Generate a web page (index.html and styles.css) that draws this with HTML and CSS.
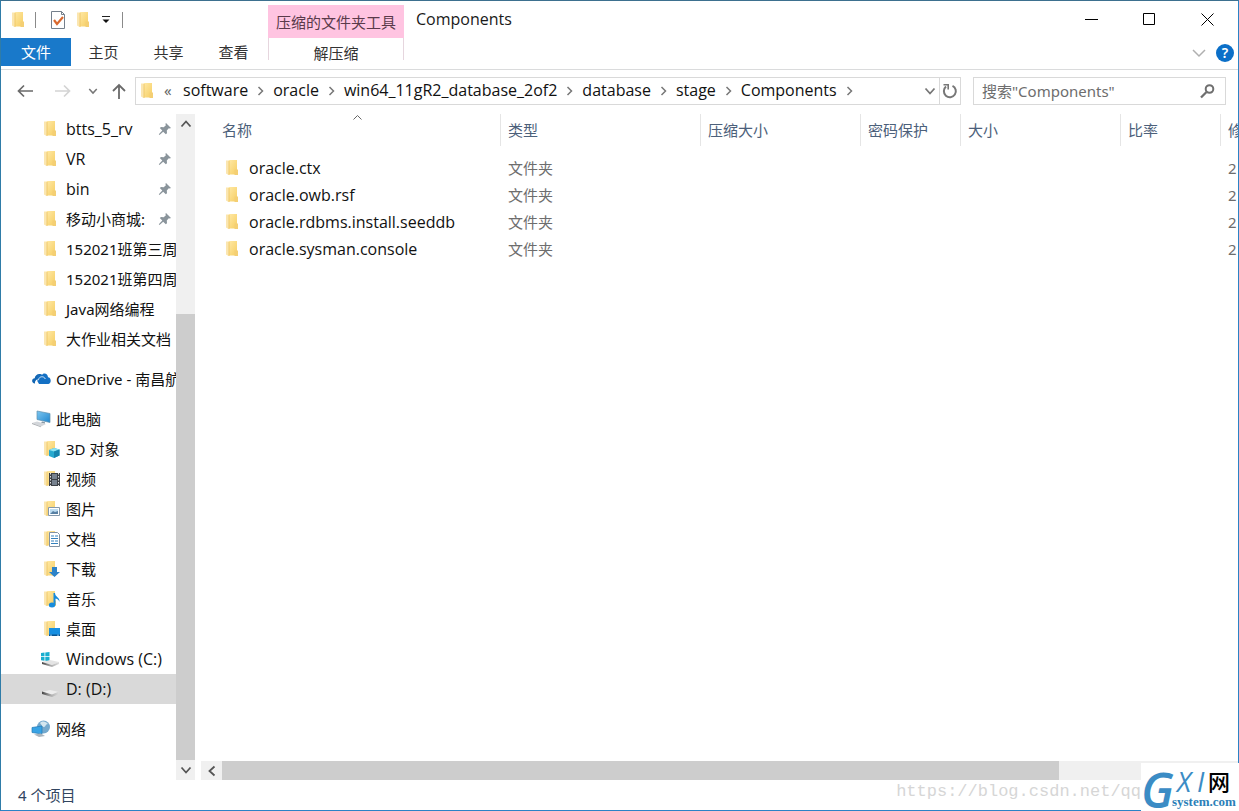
FILE: index.html
```html
<!DOCTYPE html>
<html lang="zh-CN">
<head>
<meta charset="utf-8">
<title>Components</title>
<link rel="stylesheet" href="styles.css">
</head>
<body>
<svg class="defs" aria-hidden="true">
  <defs>
    <linearGradient id="gold" x1="0" x2="1" y1="0" y2="1"><stop offset="0" stop-color="#ffe9a6"/><stop offset="1" stop-color="#f6ce63"/></linearGradient>
    <linearGradient id="screen" x1="0" x2="1" y1="0" y2="1"><stop offset="0" stop-color="#7cc6f0"/><stop offset="1" stop-color="#2187cf"/></linearGradient>
    <linearGradient id="metal" x1="0" x2="1"><stop offset="0" stop-color="#444"/><stop offset=".5" stop-color="#aaa"/><stop offset="1" stop-color="#ddd"/></linearGradient>
    <symbol id="folder" viewBox="0 0 20 20"><path d="M4 2.500h2.500V17L4 15.500z" fill="#fbe6b0"/><path d="M6.500 2h8.500v14.500H6.500z" fill="url(#gold)"/><path d="M6.500 3h1v14h-1z" fill="#efc869"/><path d="M12.500 11.500H16V17h-3.500z" fill="#f4cf74"/></symbol>
    <symbol id="chev-r" viewBox="0 0 10 10"><path d="M3 1l4 4-4 4" fill="none" stroke="currentColor" stroke-width="1.500"/></symbol>
    <symbol id="chev-d" viewBox="0 0 12 12"><path d="M1.500 3.500L6 8.500l4.500-5" fill="none" stroke="currentColor" stroke-width="1.800"/></symbol>
    <symbol id="pin" viewBox="0 0 14 14"><path d="M8 1l5 5-1.300.6-.9-.4-2 2.300.2 2.700-1.200 1.100-2.600-2.600L1.500 13 .8 12.300l3.500-3.700L1.800 6l1.200-1.100 2.700.4L7.900 3.200 7.400 2z" fill="#8a949b"/></symbol>
  </defs>
</svg>
<div class="window">
  <header class="ribbon">
    <div class="ribbon-left">
      <div class="quick">
        <svg class="ic"><use href="#folder"/></svg>
        <span class="bar"></span>
        <button class="plain" aria-label="属性"><svg class="ic" viewBox="0 0 20 20"><path d="M3.500 1.500h10l3 3v14h-13z" fill="#fff" stroke="#75808c"/><path d="M13.500 1.500v3h3" fill="none" stroke="#75808c"/><path d="M6 10l3 4 6-7" fill="none" stroke="#d9692f" stroke-width="2.200"/></svg></button>
        <button class="plain" aria-label="新建文件夹"><svg class="ic"><use href="#folder"/></svg></button>
        <button class="plain more" aria-label="自定义"><svg width="8" height="8" viewBox="0 0 8 8"><path d="M0 .5h8" stroke="#222"/><path d="M.5 3.500h7L4 7z" fill="#111"/></svg></button>
        <span class="bar"></span>
      </div>
      <nav class="tabs"><button class="tab file">文件</button><button class="tab">主页</button><button class="tab">共享</button><button class="tab">查看</button></nav>
    </div>
    <div class="context"><div class="context-name">压缩的文件夹工具</div><button class="context-tab">解压缩</button></div>
    <h1 class="title">Components</h1>
    <div class="ribbon-right">
      <div class="controls">
        <button class="plain" aria-label="最小化"><svg width="13" height="13" viewBox="0 0 13 13"><path d="M0 6.500h13" stroke="#000"/></svg></button>
        <button class="plain" aria-label="最大化"><svg width="13" height="13" viewBox="0 0 13 13"><path d="M.5.5h11v11H.5z" fill="none" stroke="#000"/></svg></button>
        <button class="plain" aria-label="关闭"><svg width="13" height="13" viewBox="0 0 13 13"><path d="M.5.5l12 12M12.500.5l-12 12" stroke="#000"/></svg></button>
      </div>
      <div class="help-row">
        <button class="plain expand" aria-label="展开功能区"><svg width="14" height="14" viewBox="0 0 14 14"><path d="M1 4l6 6 6-6" fill="none" stroke="#b0b0b0" stroke-width="1.500"/></svg></button>
        <button class="help" aria-label="帮助">?</button>
      </div>
    </div>
  </header>

  <div class="navbar">
    <button class="plain nav" aria-label="后退"><svg width="16" height="16" viewBox="0 0 16 16"><path d="M16 8H1.500M7 2.500L1.500 8 7 13.500" fill="none" stroke="#6a6a6a" stroke-width="1.700"/></svg></button>
    <button class="plain nav" aria-label="前进"><svg width="16" height="16" viewBox="0 0 16 16"><path d="M0 8h14.500M9 2.500L14.500 8 9 13.500" fill="none" stroke="#d4d4d4" stroke-width="1.700"/></svg></button>
    <button class="plain nav recent" aria-label="最近位置"><svg width="10" height="10"><use href="#chev-d"/></svg></button>
    <button class="plain nav up" aria-label="上移"><svg width="16" height="16" viewBox="0 0 16 16"><path d="M8 16V2M2 8l6-6 6 6" fill="none" stroke="#6a6a6a" stroke-width="1.800"/></svg></button>
    <div class="address">
      <svg class="ic addr-ic"><use href="#folder"/></svg>
      <span class="laquo">«</span>
      <a href="#">software</a><svg class="sep"><use href="#chev-r"/></svg>
      <a href="#">oracle</a><svg class="sep"><use href="#chev-r"/></svg>
      <a href="#">win64_11gR2_database_2of2</a><svg class="sep"><use href="#chev-r"/></svg>
      <a href="#">database</a><svg class="sep"><use href="#chev-r"/></svg>
      <a href="#">stage</a><svg class="sep"><use href="#chev-r"/></svg>
      <a href="#">Components</a><svg class="sep"><use href="#chev-r"/></svg>
      <span class="grow"></span>
      <button class="plain drop" aria-label="历史"><svg width="12" height="12"><use href="#chev-d"/></svg></button>
      <button class="plain refresh" aria-label="刷新"><svg width="16" height="16" viewBox="0 0 16 16"><path d="M10.500 2.800A6 6 0 1 1 4 3.600" fill="none" stroke="#777" stroke-width="2"/><path d="M1.500 1.800h4.700v4.700" fill="none" stroke="#777" stroke-width="1.600"/></svg></button>
    </div>
    <div class="search">
      <input type="text" aria-label="搜索" placeholder="搜索&quot;Components&quot;">
      <svg width="15" height="15" viewBox="0 0 15 15"><circle cx="9.500" cy="5" r="3.800" fill="none" stroke="#6f6f6f" stroke-width="2"/><path d="M6.500 8L1 13.500" stroke="#6f6f6f" stroke-width="2.300"/></svg>
    </div>
  </div>

  <div class="body">
    <nav class="tree">
      <a class="item" href="#"><svg class="ic"><use href="#folder"/></svg><span class="latin">btts_5_rv</span><svg class="pin"><use href="#pin"/></svg></a>
      <a class="item" href="#"><svg class="ic"><use href="#folder"/></svg><span class="latin">VR</span><svg class="pin"><use href="#pin"/></svg></a>
      <a class="item" href="#"><svg class="ic"><use href="#folder"/></svg><span class="latin">bin</span><svg class="pin"><use href="#pin"/></svg></a>
      <a class="item" href="#"><svg class="ic"><use href="#folder"/></svg><span>移动小商城:</span><svg class="pin"><use href="#pin"/></svg></a>
      <a class="item" href="#"><svg class="ic"><use href="#folder"/></svg><span>152021班第三周</span></a>
      <a class="item" href="#"><svg class="ic"><use href="#folder"/></svg><span>152021班第四周</span></a>
      <a class="item" href="#"><svg class="ic"><use href="#folder"/></svg><span>Java网络编程</span></a>
      <a class="item" href="#"><svg class="ic"><use href="#folder"/></svg><span>大作业相关文档</span></a>
      <a class="item root" href="#"><svg class="ic" viewBox="0 0 20 20"><path d="M6 11.500C5 8 8 5 11 6c2-3 6-1 6 2.200 3 0 4 5.800.5 6.800H8z" fill="#1470c4"/><path d="M4 14.500c-4-.3-3.500-5.200-.3-5.200C4 5 9 3.600 11.500 6.200 8 5.500 6 8 6.300 10.200 4.500 11 3.800 13 4 14.500z" fill="#1265b2"/><path d="M7.500 15.500c-3.600-.4-3-4.700 0-4.700.5-3.800 5.800-4 6.800-.8" fill="none" stroke="#fff" stroke-width=".8"/></svg><span>OneDrive - 南昌航</span></a>
      <a class="item root" href="#"><svg class="ic" viewBox="0 0 20 20"><path d="M6 2l13 2.500v9L6 10.500z" fill="url(#screen)" stroke="#5e8fae" stroke-width=".7"/><path d="M11 12.500l3 .7v1.500l-4-1z" fill="#8798a5"/><path d="M1 14l5-1.500 9 2.500-5 2.500z" fill="#d3d6da"/><path d="M1 14l9 3.500v.8L1 15z" fill="#a5a9ae"/></svg><span>此电脑</span></a>
      <a class="item" href="#"><svg class="ic" viewBox="0 0 20 20"><use href="#folder" width="20" height="20"/><path d="M9 11l5-2 5.500 1.500v6L14 19l-5-2z" fill="#26a9cf"/><path d="M9 11l5-2 5.500 1.500-5.500 2z" fill="#8de2f1"/><path d="M14 12.500l5.500-2v6L14 19z" fill="#1684ae"/></svg><span>3D 对象</span></a>
      <a class="item" href="#"><svg class="ic" viewBox="0 0 20 20"><use href="#folder" width="20" height="20"/><path d="M9 4h11v13H9z" fill="#3d4147"/><path d="M12 5h5v5h-5zm0 6h5v5h-5z" fill="#77828f"/><path d="M10.500 4v13M18.500 4v13" stroke="#e1e1e1" stroke-dasharray="1.500 1.500"/></svg><span>视频</span></a>
      <a class="item" href="#"><svg class="ic" viewBox="0 0 20 20"><use href="#folder" width="20" height="20"/><path d="M8.500 8.500h11v8h-11z" fill="#fff" stroke="#8599ab"/><path d="M10 10h8v5h-8z" fill="#bcdcf1"/><path d="M10 15l3-3 2 1 3-1v3z" fill="#5880a3"/></svg><span>图片</span></a>
      <a class="item" href="#"><svg class="ic" viewBox="0 0 20 20"><use href="#folder" width="20" height="20"/><path d="M9.500 3.500h8l2 2v12h-10z" fill="#fff" stroke="#8192a2"/><path d="M11 7h3m1 0h3m-7 2.500h7M11 12h3m1 0h3m-7 2.500h7" stroke="#3481bd"/></svg><span>文档</span></a>
      <a class="item" href="#"><svg class="ic" viewBox="0 0 20 20"><use href="#folder" width="20" height="20"/><path d="M12 8h5v5h3l-5.500 5L9 13h3z" fill="#2d83c9"/></svg><span>下载</span></a>
      <a class="item" href="#"><svg class="ic" viewBox="0 0 20 20"><use href="#folder" width="20" height="20"/><ellipse cx="12" cy="16" rx="3.200" ry="2.500" fill="#168bdc"/><path d="M13.500 16V4H15c0 4 5 4 4.500 9-1-3-3-3-4-3.500V16z" fill="#168bdc"/></svg><span>音乐</span></a>
      <a class="item" href="#"><svg class="ic" viewBox="0 0 20 20"><use href="#folder" width="20" height="20"/><path d="M9 9h11v8H9z" fill="#168fe2"/><path d="M9 15.500h11V17H9z" fill="#075493"/><path d="M10 16.200h2m5 0h2" stroke="#a7dbff" stroke-width=".8"/></svg><span>桌面</span></a>
      <a class="item" href="#"><svg class="ic drive" viewBox="0 0 20 20"><path d="M1 4l3.500-.5v3.700H1zM5.300 3.400L9.500 3v4.200H5.300zM1 8h3.500v3.700L1 11.200zm4.300 0h4.200v4.300l-4.200-.5z" fill="#18aecf"/><path d="M2 13l8-2 9 2-7 3z" fill="#e4e4e4"/><path d="M2 13l10 3 7-3v2l-7 3-10-3z" fill="url(#metal)"/></svg><span class="latin">Windows (C:)</span></a>
      <a class="item selected" href="#"><svg class="ic drive" viewBox="0 0 20 20"><path d="M2 13l8-2 9 2-7 3z" fill="#ededed"/><path d="M2 12.500l10 3 7-3v2.500l-7 3-10-3z" fill="url(#metal)"/></svg><span class="latin">D: (D:)</span></a>
      <a class="item root" href="#"><svg class="ic" viewBox="0 0 20 20"><circle cx="12.500" cy="8" r="6.500" fill="#75a9cd"/><path d="M9 4c3-3 6-1 8 1-3 0-2 3-4 3s-2-2-4-4z" fill="#d4e6ef"/><path d="M1 8.500l10-1.500v8L1 13.500z" fill="#38a3e5" stroke="#2278b3" stroke-width=".7"/><path d="M3 15.500l7-1 4 2.500-6 1z" fill="#a9b4bd"/></svg><span>网络</span></a>
    </nav>
    <div class="vscroll">
      <button class="plain arrow" aria-label="向上滚动"><svg class="flip" width="12" height="12"><use href="#chev-d"/></svg></button>
      <div class="vrest"></div>
      <div class="vthumb"></div>
      <button class="plain arrow" aria-label="向下滚动"><svg width="12" height="12"><use href="#chev-d"/></svg></button>
    </div>
    <main class="main">
      <div class="list">
        <table>
          <colgroup><col class="c-name"><col class="c-wide"><col class="c-mid"><col class="c-small"><col class="c-mid"><col class="c-small"><col></colgroup>
          <thead><tr><th class="sorted">名称<svg class="sort" width="9" height="5" viewBox="0 0 9 5"><path d="M.5 4.500l4-4 4 4" fill="none" stroke="#666"/></svg></th><th>类型</th><th>压缩大小</th><th>密码保护</th><th>大小</th><th>比率</th><th>修</th></tr></thead>
          <tbody>
            <tr><td><span class="fname"><svg class="ic"><use href="#folder"/></svg>oracle.ctx</span></td><td>文件夹</td><td></td><td></td><td></td><td></td><td>2</td></tr>
            <tr><td><span class="fname"><svg class="ic"><use href="#folder"/></svg>oracle.owb.rsf</span></td><td>文件夹</td><td></td><td></td><td></td><td></td><td>2</td></tr>
            <tr><td><span class="fname"><svg class="ic"><use href="#folder"/></svg>oracle.rdbms.install.seeddb</span></td><td>文件夹</td><td></td><td></td><td></td><td></td><td>2</td></tr>
            <tr><td><span class="fname"><svg class="ic"><use href="#folder"/></svg>oracle.sysman.console</span></td><td>文件夹</td><td></td><td></td><td></td><td></td><td>2</td></tr>
          </tbody>
        </table>
      </div>
      <div class="hscroll">
        <button class="plain harrow" aria-label="向左滚动"><svg class="left" width="12" height="12"><use href="#chev-d"/></svg></button>
        <div class="hthumb"></div><div class="hrest"></div>
      </div>
    </main>
  </div>
  <footer class="status">4 个项目</footer>
</div>
<div class="watermark">https://blog.csdn.net/qq</div>
<div class="logo">
  <svg width="98" height="48" viewBox="0 0 98 48" role="img" aria-label="GXI网 system.com">
    <text class="lg-g" x="0" y="45">G</text>
    <text class="lg-x" x="36" y="29">X</text>
    <text class="lg-x" x="56" y="29">I</text>
    <text class="lg-w" x="67" y="27">网</text>
    <text class="lg-s" x="31" y="43">system.com</text>
  </svg>
</div>
</body>
</html>
```
FILE: styles.css
```css
* { box-sizing: border-box; }
body {
  margin: 0;
  background: #fff;
  color: #1a1a1a;
  font: 15px/20px "Noto Sans", "Noto Sans CJK SC", sans-serif;
  overflow: hidden;
}
button, input { font: inherit; color: inherit; }
a { color: inherit; text-decoration: none; }
.defs { position: absolute; width: 0; height: 0; }
.ic { width: 20px; height: 20px; flex: none; display: block; }
.plain, .tab, .context-tab { border: 0; padding: 0; background: none; display: flex; align-items: center; justify-content: center; }
.latin, .title, .address a, .fname { font: 400 16px/20px "Open Sans", "Noto Sans CJK SC", sans-serif; }

.window {
  height: 100vh;
  display: flex;
  flex-direction: column;
  border: 1px solid #2b83c6;
  border-top-color: #3d708f;
  border-left-color: #2f7ca8;
}

.ribbon { display: flex; height: 69px; border-bottom: 1px solid #dadbdc; flex: none; }
.ribbon-left { width: 267px; }
.quick { height: 37px; display: flex; align-items: center; padding-left: 7px; }
.bar { width: 1px; height: 16px; background: #8a8a8a; }
.quick .bar { margin-left: 7px; }
.quick .bar + .plain { margin-left: 12px; }
.quick .plain + .plain { margin-left: 5px; }
.quick .more { width: 8px; }
.quick .plain + .more { margin-left: 9px; }
.quick .more + .bar { margin-left: 12px; }
.tabs { display: flex; height: 28px; }
.tab { width: 65px; color: #333; }
.tab.file { width: 70px; background: #1979ca; color: #fff; }
.context { width: 136px; padding-top: 4px; }
.context-name { height: 33px; background: #ffc4e1; color: #5a3a4a; text-align: center; line-height: 34px; white-space: nowrap; }
.context-tab { width: 100%; height: 22px; border: solid #e6d6de; border-width: 0 1px; color: #333; padding-top: 8px; }
.title { flex: 1; margin: 0; padding: 8px 0 0 12px; }
.controls { display: flex; height: 37px; padding-right: 2px; }
.controls .plain { width: 58px; }
.help-row { display: flex; justify-content: flex-end; align-items: center; height: 30px; padding-right: 4px; }
.expand { margin-right: 10px; }
.help { width: 18px; height: 18px; padding: 0; border: 0; border-radius: 50%; background: #0b6fc8; color: #fff; font-size: 14px; font-weight: 600; line-height: 18px; }

.navbar { display: flex; align-items: center; height: 44px; padding: 0 12px 2px 10px; flex: none; }
.nav { width: 28px; height: 28px; color: #777; }
.nav + .nav { margin-left: 10px; }
.nav.recent { width: 20px; margin-left: 6px; }
.nav.up { width: 28px; margin-left: 2px; margin-right: 2px; }
.address { flex: 1; display: flex; align-items: center; height: 28px; border: 1px solid #d9d9d9; color: #111; white-space: nowrap; min-width: 0; }
.address a { padding-bottom: 2px; }
.addr-ic { margin-left: 1px; }
.laquo { width: 26px; padding: 0 0 2px 7px; color: #666; }
.sep { width: 25px; height: 10px; color: #777; flex: none; }
.grow { flex: 1; }
.drop { width: 18px; height: 26px; color: #777; }
.refresh { width: 21px; height: 26px; border-left: 1px solid #d9d9d9; }
.search { width: 253px; height: 28px; margin-left: 12px; border: 1px solid #d9d9d9; display: flex; align-items: center; padding: 0 10px 0 8px; }
.search input { flex: 1; min-width: 0; border: 0; padding: 0; outline: 0; background: none; }
.search input::placeholder { color: #6d6d6d; opacity: 1; }

.body { flex: 1; display: flex; min-height: 0; }
.tree { width: 175px; overflow: hidden; flex: none; }
.item { display: flex; align-items: center; height: 30px; padding-left: 39px; white-space: nowrap; color: #111; }
.item span { margin-left: 6px; }
.item.root { padding-left: 30px; margin: 10px 0; }
.item.root + .item.root { margin-top: 0; }
.item.root:not(:last-child) + .item:not(.root) { margin-top: -10px; }
.item.root span { margin-left: 5px; }
.item.selected { background: #d9d9d9; }
.item .pin { width: 14px; height: 14px; margin-left: auto; margin-right: 4px; }

.vscroll { width: 19px; display: flex; flex-direction: column; background: #f0f0f0; flex: none; color: #555; }
.arrow { height: 20px; width: 100%; flex: none; }
.flip { transform: rotate(180deg); }
.left { transform: rotate(90deg); }
.vrest { flex: 180; }
.vthumb { flex: 446; background: #cdcdcd; }

.main { flex: 1; min-width: 0; display: flex; flex-direction: column; padding-left: 6px; }
.list { flex: 1; overflow: hidden; }
table { width: 100%; table-layout: fixed; border-collapse: separate; border-spacing: 0; }
.c-name { width: 300px; }
.c-wide { width: 200px; }
.c-mid { width: 160px; }
.c-small { width: 100px; }
th { height: 32px; padding: 0 0 0 7px; border-right: 1px solid #e5e5e5; text-align: left; font-weight: 400; color: #4c607a; white-space: nowrap; overflow: hidden; }
th:last-child { border-right: 0; }
th.sorted { padding-left: 21px; position: relative; }
.sort { position: absolute; top: 1px; left: 152px; }
tbody::before { content: ""; display: block; height: 8px; }
td { height: 27px; padding: 0 0 0 7px; color: #6d6d6d; white-space: nowrap; overflow: hidden; }
td:first-child { padding-left: 21px; color: #111; }
.fname { display: flex; align-items: center; gap: 7px; }
.hscroll { height: 19px; display: flex; background: #f0f0f0; color: #555; flex: none; }
.harrow { width: 21px; }
.hthumb { flex: 837; background: #cdcdcd; }
.hrest { flex: 179; }

.status { height: 30px; flex: none; padding: 5px 0 0 17px; color: #31455f; }
.watermark { position: absolute; right: 98px; bottom: 9px; font: 17px/20px "Liberation Mono", monospace; color: #d6d6d6; }
.logo { position: absolute; right: 0; bottom: 0; width: 98px; height: 48px; background: #fff; }
.logo svg { display: block; }
.lg-g { font: italic 600 48px "Open Sans", sans-serif; fill: #3b8cc5; }
.lg-x { font: italic 400 27px "Open Sans", sans-serif; fill: #3b8cc5; }
.lg-w { font: 500 22px "Noto Sans CJK SC", sans-serif; fill: #000; }
.lg-s { font: bold 13px "Liberation Serif", serif; fill: #2b7fb8; }
```
